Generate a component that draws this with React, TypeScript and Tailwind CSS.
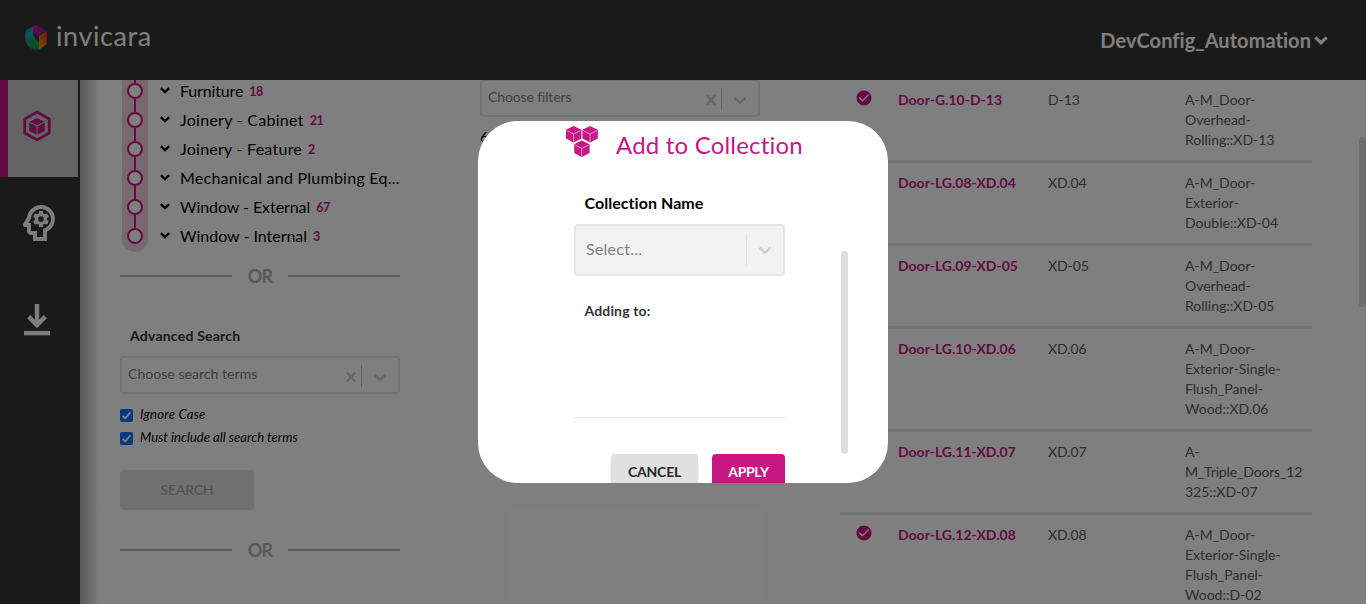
import { MdCheckCircle, MdOutlinePsychology } from "react-icons/md";

const CHEVRON =
  "M4.516 7.548c0.436-0.446 1.043-0.481 1.576 0l3.908 3.747 3.908-3.747c0.533-0.481 1.141-0.446 1.574 0 0.436 0.445 0.408 1.197 0 1.615-0.406 0.418-4.695 4.502-4.695 4.502-0.217 0.223-0.502 0.335-0.787 0.335s-0.57-0.112-0.789-0.335c0 0-4.287-4.084-4.695-4.502s-0.436-1.17 0-1.615z";
const CROSS =
  "M14.348 14.849c-0.469 0.469-1.229 0.469-1.697 0l-2.651-3.030-2.651 3.029c-0.469 0.469-1.229 0.469-1.697 0-0.469-0.469-0.469-1.229 0-1.697l2.758-3.15-2.759-3.152c-0.469-0.469-0.469-1.228 0-1.697s1.228-0.469 1.697 0l2.652 3.031 2.651-3.031c0.469-0.469 1.228-0.469 1.697 0s0.469 1.229 0 1.697l-2.758 3.152 2.758 3.15c0.469 0.469 0.469 1.229 0 1.698z";

const categories = [
  { name: "Furniture", count: "18", tracking: "tracking-[-0.15px]" },
  { name: "Joinery - Cabinet", count: "21", tracking: "tracking-[0.27px]" },
  { name: "Joinery - Feature", count: "2", tracking: "tracking-[0.25px]" },
  { name: "Mechanical and Plumbing Eq...", count: "", tracking: "tracking-[0.25px]" },
  { name: "Window - External", count: "67", tracking: "tracking-[-0.07px]" },
  { name: "Window - Internal", count: "3", tracking: "tracking-[-0.02px]" },
];

const doors = [
  { checked: true, name: "Door-G.10-D-13", mark: "D-13", type: ["A-M_Door-", "Overhead-", "Rolling::XD-13"] },
  { checked: false, name: "Door-LG.08-XD.04", mark: "XD.04", type: ["A-M_Door-", "Exterior-", "Double::XD-04"] },
  { checked: false, name: "Door-LG.09-XD-05", mark: "XD-05", type: ["A-M_Door-", "Overhead-", "Rolling::XD-05"] },
  { checked: false, name: "Door-LG.10-XD.06", mark: "XD.06", type: ["A-M_Door-", "Exterior-Single-", "Flush_Panel-", "Wood::XD.06"] },
  { checked: false, name: "Door-LG.11-XD.07", mark: "XD.07", type: ["A-", "M_Triple_Doors_12", "325::XD-07"] },
  { checked: true, name: "Door-LG.12-XD.08", mark: "XD.08", type: ["A-M_Door-", "Exterior-Single-", "Flush_Panel-", "Wood::D-02"] },
];

function Glyph({ d, className }: { d: string; className: string }) {
  return (
    <svg viewBox="0 0 20 20" className={className} fill="currentColor">
      <path d={d} />
    </svg>
  );
}

function Angle({ className }: { className: string }) {
  return (
    <svg viewBox="0 0 12 8" className={className} fill="none" stroke="currentColor" strokeWidth="2.8">
      <path d="M1 1.2 6 6 11 1.2" />
    </svg>
  );
}

function FilterBox({ label, tracking }: { label: string; tracking: string }) {
  return (
    <div className="flex h-[38px] w-[280px] shrink-0 rounded-[4px] border-2 border-[#e6e6e6] pl-1.5">
      <span className={`flex-1 text-sm leading-[32px] text-[#808080] ${tracking}`}>{label}</span>
      <Glyph d={CROSS} className="mt-[9px] size-5 text-[#cccccc]" />
      <div className="mt-[7px] h-[22px] w-px bg-[#cccccc]" />
      <Glyph d={CHEVRON} className="mt-[9px] mr-2 ml-2 size-5 text-[#cccccc]" />
    </div>
  );
}

function OrDivider() {
  return (
    <div className="flex h-6 shrink-0 items-center justify-between">
      <div className="h-0.5 w-28 bg-[#b4b4b4]" />
      <span className="text-lg leading-6 font-bold tracking-[-0.9px] text-[#b0b0b0]">OR</span>
      <div className="h-0.5 w-28 bg-[#b4b4b4]" />
    </div>
  );
}

function CheckRow({ label, tracking }: { label: string; tracking: string }) {
  return (
    <div className="flex h-[23px] items-center">
      <svg viewBox="0 0 13 13" className="mt-px size-[13px]">
        <rect width="13" height="13" rx="2" fill="#0075ff" />
        <path d="M2.6 6.8 5.2 9.4 10.4 3.4" fill="none" stroke="#fff" strokeWidth="1.9" />
      </svg>
      <span className={`mt-[-1px] ml-[7px] text-[13px] leading-5 text-black italic ${tracking}`}>{label}</span>
    </div>
  );
}

function Header() {
  return (
    <header className="flex h-20 shrink-0 items-center justify-between bg-[#353535] pr-[38px] pl-[25px]">
      <div className="flex items-center">
        <svg viewBox="0 0 22 25" className="mt-[-5px] h-[25px] w-[22px]">
          <defs>
            <linearGradient id="lg-left" x1="0" y1="0" x2="0.4" y2="1">
              <stop offset="0" stopColor="#1a8fe0" />
              <stop offset="0.45" stopColor="#14a5b5" />
              <stop offset="1" stopColor="#129a35" />
            </linearGradient>
            <linearGradient id="lg-top" x1="0" y1="0" x2="1" y2="0.6">
              <stop offset="0" stopColor="#dc1b8b" />
              <stop offset="1" stopColor="#6c1c98" />
            </linearGradient>
            <linearGradient id="lg-right" x1="0" y1="1" x2="0.6" y2="0">
              <stop offset="0" stopColor="#f2a010" />
              <stop offset="1" stopColor="#dd4520" />
            </linearGradient>
          </defs>
          <path d="M8 1.4 2 4.6C-0.5 6.5-0.4 15 2.2 19.2 4.5 23.4 8.5 25.6 14 24.4V17C10.5 14.5 8 10.5 8 6.4Z" fill="url(#lg-left)" />
          <path d="M8 1.4C8.6-.1 10.6-.3 12.5.7L21.7 6 14 11 8 7.4Z" fill="url(#lg-top)" />
          <path d="M21.7 6V19.6L14 24.4V11Z" fill="url(#lg-right)" />
        </svg>
        <span className="mt-[-8px] ml-[9px] text-[27px] leading-8 tracking-[0.6px] text-white">invicara</span>
      </div>
      <div className="flex items-center text-white">
        <span className="mt-[-1px] mr-[-1px] text-xl leading-6 font-bold tracking-[0.05px]">DevConfig_Automation</span>
        <Angle className="ml-1 h-[9px] w-[14px]" />
      </div>
    </header>
  );
}

function Sidebar() {
  return (
    <nav className="flex w-20 shrink-0 flex-col bg-[#353535] text-[#fafafa]">
      <div className="flex h-[97px] w-[78px] border-l-8 border-[#c71784] bg-[#c8c8c8]">
        <svg viewBox="0 0 28 32" className="mt-[30px] ml-[15px] h-8 w-7" fill="#c71784">
          <path d="M14 2 26.3 9v14L14 30 1.7 23V9Z" fill="none" stroke="#c71784" strokeWidth="2.8" />
          <path d="M14 8 21.2 11.8 14 15.4 6.8 11.8Z" />
          <path d="M6.2 12.6 13.5 16.4V24.8L6.2 20.8Z" />
          <path d="M21.8 12.6 14.5 16.4V24.8L21.8 20.8Z" />
        </svg>
      </div>
      <MdOutlinePsychology className="mt-[22px] ml-[15px] size-12" />
      <svg viewBox="0 0 26 32" className="mt-[57px] ml-6 h-8 w-[26px]" fill="none" stroke="currentColor" strokeWidth="4.4">
        <path d="M13 0V22" />
        <path d="M4.7 12.6 13 21 21.3 12.6" />
        <path d="M0 29.1H26" />
      </svg>
    </nav>
  );
}

function SearchPanel() {
  return (
    <section className="ml-10 flex w-[280px] shrink-0 flex-col">
      <div className="-mt-1 flex">
        <div className="ml-0.5 flex h-[176px] w-[26px] shrink-0 flex-col items-center rounded-b-[13px] bg-[#f0d0e0]">
          {categories.map((c) => (
            <div key={c.name} className="flex h-[29px] flex-col items-center">
              <div className="h-[7px] w-0.5 bg-[#c71784]" />
              <div className="size-4 rounded-full border-2 border-[#c71784] bg-white" />
              <div className={c.name === "Window - Internal" ? "h-1.5" : "h-1.5 w-0.5 bg-[#c71784]"} />
            </div>
          ))}
        </div>
        <ul className="ml-3 flex-1">
          {categories.map((c) => (
            <li key={c.name} className="flex h-[29px] items-center">
              <Angle className="mt-[-1px] h-[7px] w-[10px] shrink-0 text-black" />
              <span className={`ml-2.5 text-base leading-6 whitespace-nowrap text-black ${c.tracking}`}>{c.name}</span>
              <span className="ml-1.5 pt-[3px] text-[12.5px] leading-5 font-bold tracking-[-0.4px] text-[#c71784]">{c.count}</span>
            </li>
          ))}
        </ul>
      </div>
      <div className="mt-3">
        <OrDivider />
      </div>
      <h3 className="mt-[38px] ml-2.5 h-5 text-sm leading-5 font-bold tracking-[0.22px] text-[#333]">Advanced Search</h3>
      <div className="mt-2.5">
        <FilterBox label="Choose search terms" tracking="tracking-[0.05px]" />
      </div>
      <div className="mt-[9px]">
        <CheckRow label="Ignore Case" tracking="tracking-[0.26px]" />
        <CheckRow label="Must include all search terms" tracking="tracking-[0.04px]" />
      </div>
      <div className="mt-[21px] flex h-10 w-[134px] items-center justify-center rounded-[4px] bg-[#e0e0e0] text-sm font-medium tracking-[-0.2px] text-[#a6a6a6]">
        SEARCH
      </div>
      <div className="mt-7">
        <OrDivider />
      </div>
    </section>
  );
}

function ResultsTable() {
  return (
    <section className="ml-20 w-[472px] shrink-0 text-sm leading-5">
      {doors.map((d) => (
        <div key={d.name} className="flex border-b-[3px] border-[#e6e6e6] py-2.5">
          <div className="w-[58px] pl-[15px]">
            {d.checked && <MdCheckCircle className="mt-[-1px] size-[18px] text-[#c71784]" />}
          </div>
          <div className="w-[150px] font-bold text-[#c71784]">{d.name}</div>
          <div className="w-[137px] tracking-[-0.1px] text-[#5c5c5c]">{d.mark}</div>
          <div className="text-[#5c5c5c]">
            {d.type.map((line) => (
              <div key={line} className={line.startsWith("M_Triple") ? "tracking-[-0.15px]" : ""}>
                {line}
              </div>
            ))}
          </div>
        </div>
      ))}
    </section>
  );
}

function Cube({ x, y }: { x: number; y: number }) {
  return (
    <g transform={`translate(${x} ${y})`}>
      <path d="M7.6 0 15.4 3.8V12.6L7.6 16.6 0 12.6V3.8Z" fill="#c71784" />
      <path d="M0.8 4.6 7.6 8 14.6 4.6M7.6 8V16" fill="none" stroke="#f6d5e9" strokeWidth="0.6" />
    </g>
  );
}

function CollectionDialog() {
  return (
    <div className="relative flex h-[362px] w-[410px] overflow-hidden rounded-[40px] bg-white">
      <div className="flex w-[363px] flex-col">
        <div className="flex h-[50px] shrink-0 pl-[88px]">
          <svg viewBox="0 0 32 32" className="mt-[5px] size-8">
            <Cube x={0} y={0} />
            <Cube x={16.4} y={0} />
            <Cube x={8.2} y={14.4} />
          </svg>
          <h2 className="mt-2 ml-[18px] text-2xl leading-8 tracking-[0.2px] whitespace-nowrap text-[#c71784]">Add to Collection</h2>
        </div>
        <div className="ml-24 flex w-[211px] shrink-0 flex-col">
          <label className="mt-5 ml-[10.5px] text-base leading-6 font-bold tracking-[0.05px] text-black">Collection Name</label>
          <div className="mt-[9px] flex h-[52px] items-center rounded-[4px] border-2 border-[#e6e6e6] bg-[#f2f2f2] pl-2.5">
            <span className="mt-[-2px] flex-1 text-base leading-6 tracking-[0.25px] text-[#808080]">Select...</span>
            <div className="h-8 w-px bg-[#e2e2e2]" />
            <Glyph d={CHEVRON} className="mx-2 size-5 text-[#cccccc]" />
          </div>
          <div className="mt-[25px] ml-[10.5px] text-sm leading-5 font-bold tracking-[0.15px] text-[#333]">Adding to:</div>
          <div className="mt-[96px] h-px bg-[#e2e2e2]" />
          <div className="mt-9 flex justify-end gap-3.5 text-sm leading-9 font-bold">
            <button className="h-9 w-[87px] rounded-[4px] bg-[#e0e0e0] tracking-[-0.2px] text-[#262626] shadow">CANCEL</button>
            <button className="h-9 w-[73px] rounded-[4px] bg-[#c71784] tracking-[-0.3px] text-white">APPLY</button>
          </div>
        </div>
      </div>
      <div className="mt-[130px] h-[203px] w-[7px] rounded-full bg-[#dddddd]" />
    </div>
  );
}

export default function App() {
  return (
    <div className="relative flex h-[604px] w-[1366px] flex-col overflow-hidden bg-white font-['Lato','Liberation_Sans',sans-serif]">
      <Header />
      <div className="flex h-[524px] overflow-hidden">
        <Sidebar />
        <main className="flex flex-1 overflow-hidden">
          <div className="-mr-5 h-full w-5 shrink-0 bg-linear-to-r from-black/30 to-transparent" />
          <SearchPanel />
          <section className="ml-20 w-[280px] shrink-0">
            <div className="-mt-px">
              <FilterBox label="Choose filters" tracking="tracking-[-0.13px]" />
            </div>
            <div className="mt-2.5 text-sm leading-5 text-black italic">6</div>
          </section>
          <ResultsTable />
          <div className="mt-[57px] ml-[47px] h-[170px] w-[7px] shrink-0 rounded-full bg-[#dddddd]" />
        </main>
      </div>
      <div className="absolute inset-0 flex items-center justify-center bg-black/50">
        <CollectionDialog />
      </div>
    </div>
  );
}
